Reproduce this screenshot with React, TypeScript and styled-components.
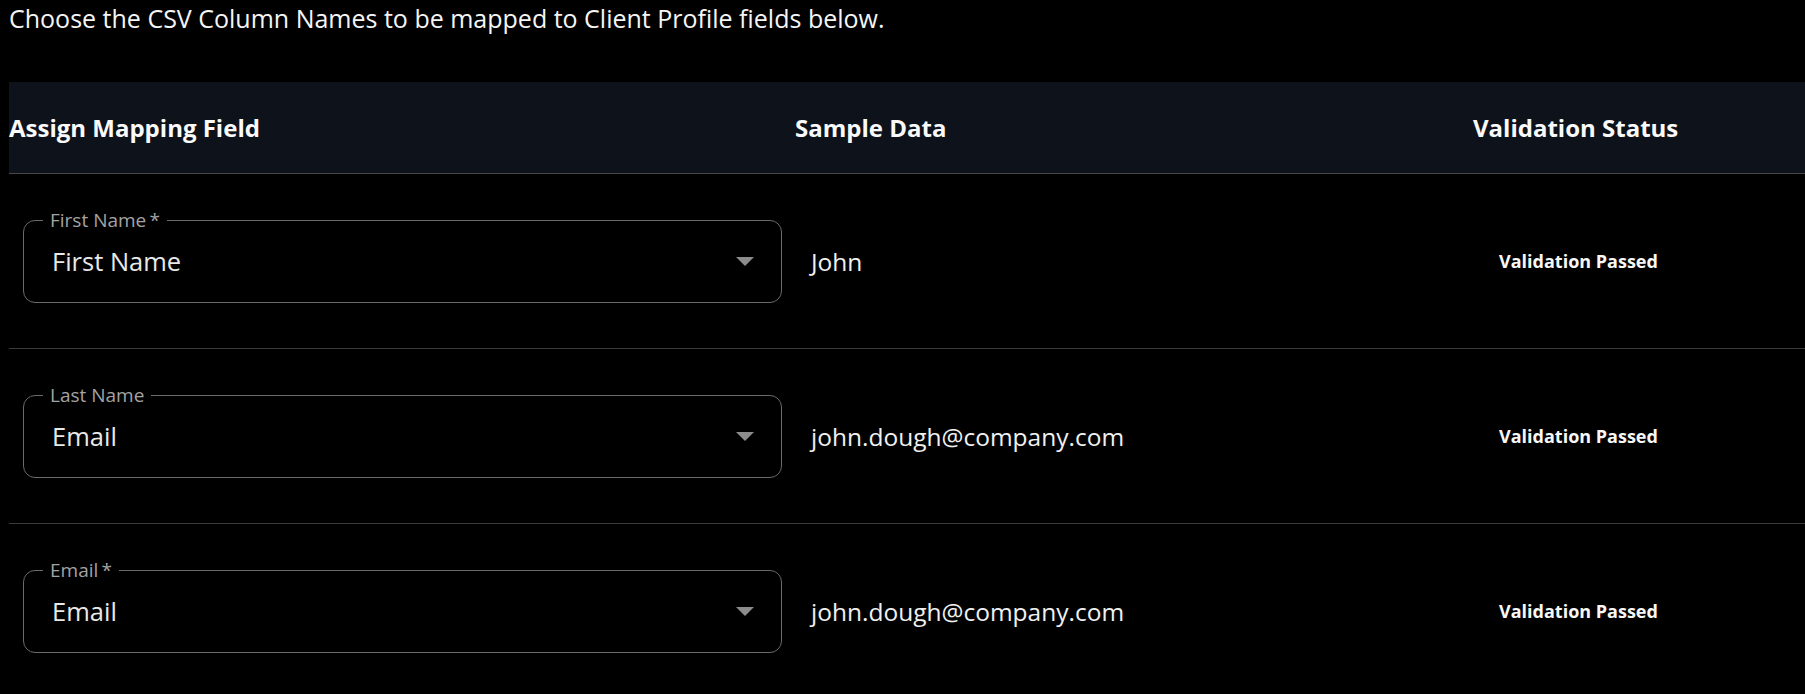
import React from 'react';
import styled, { createGlobalStyle } from 'styled-components';

const GlobalStyle = createGlobalStyle`
  html, body { margin: 0; padding: 0; background: #000; }
  body { font-family: "Open Sans", Lato, sans-serif; color: #fff; overflow: hidden; }
  * { box-sizing: border-box; }
`;

const Page = styled.div`
  padding: 3px 0 0 9px;
  display: flex;
  flex-direction: column;
`;

const Intro = styled.p`
  margin: 0;
  font-size: 25px;
  line-height: 30px;
  color: #f5f5f5;
`;

const Table = styled.div`
  margin-top: 49px;
  display: flex;
  flex-direction: column;
`;

const cols = '786px 678px 1fr';

const HeaderRow = styled.div`
  display: grid;
  grid-template-columns: ${cols};
  align-items: center;
  height: 92px;
  background: #0e121b;
  border-bottom: 1px solid #474747;
`;

const HeaderCell = styled.div`
  font-size: 24px;
  font-weight: 700;
  color: #fafafa;
`;

const BodyRow = styled.div`
  display: grid;
  grid-template-columns: ${cols};
  align-items: center;
  height: 175px;
  border-bottom: 1px solid #3a3a3a;
`;

const Cell = styled.div<{ $pl: number; $pr?: number }>`
  padding-left: ${(p) => p.$pl}px;
  padding-right: ${(p) => p.$pr ?? 0}px;
`;

const SelectBox = styled.div`
  position: relative;
  height: 83px;
  border: 1px solid #6a6a6a;
  border-radius: 12px;
  display: flex;
  align-items: center;
  justify-content: space-between;
  padding: 0 27px 0 28px;
`;

const FloatingLabel = styled.span`
  position: absolute;
  top: -13px;
  left: 19px;
  padding: 0 7px;
  background: #000;
  font-size: 19px;
  line-height: 24px;
  color: #a3a3a3;
`;

const Value = styled.span`
  font-size: 25.5px;
  color: #e8e8e8;
`;

const SampleText = styled.span`
  font-size: 24.5px;
  color: #f0f0f0;
`;

const Status = styled.span`
  font-size: 18px;
  font-weight: 700;
  color: #f7f7f7;
`;

const Arrow = () => (
  <svg width="18" height="9" viewBox="0 0 18 9">
    <path d="M0 0 L18 0 L9 9 Z" fill="#8c8c8c" />
  </svg>
);

type Row = { label: string; required: boolean; value: string; sample: string };

const rows: Row[] = [
  { label: 'First Name', required: true, value: 'First Name', sample: 'John' },
  { label: 'Last Name', required: false, value: 'Email', sample: 'john.dough@company.com' },
  { label: 'Email', required: true, value: 'Email', sample: 'john.dough@company.com' },
];

export default function App() {
  return (
    <>
      <GlobalStyle />
      <Page>
        <Intro>Choose the CSV Column Names to be mapped to Client Profile fields below.</Intro>
        <Table>
          <HeaderRow>
            <HeaderCell>Assign Mapping Field</HeaderCell>
            <HeaderCell>Sample Data</HeaderCell>
            <HeaderCell>Validation Status</HeaderCell>
          </HeaderRow>
          {rows.map((r, i) => (
            <BodyRow key={i}>
              <Cell $pl={14} $pr={13}>
                <SelectBox>
                  <FloatingLabel>
                    {r.label}
                    {r.required ? '\u2009*' : ''}
                  </FloatingLabel>
                  <Value>{r.value}</Value>
                  <Arrow />
                </SelectBox>
              </Cell>
              <Cell $pl={16}>
                <SampleText>{r.sample}</SampleText>
              </Cell>
              <Cell $pl={26}>
                <Status>Validation Passed</Status>
              </Cell>
            </BodyRow>
          ))}
        </Table>
      </Page>
    </>
  );
}
